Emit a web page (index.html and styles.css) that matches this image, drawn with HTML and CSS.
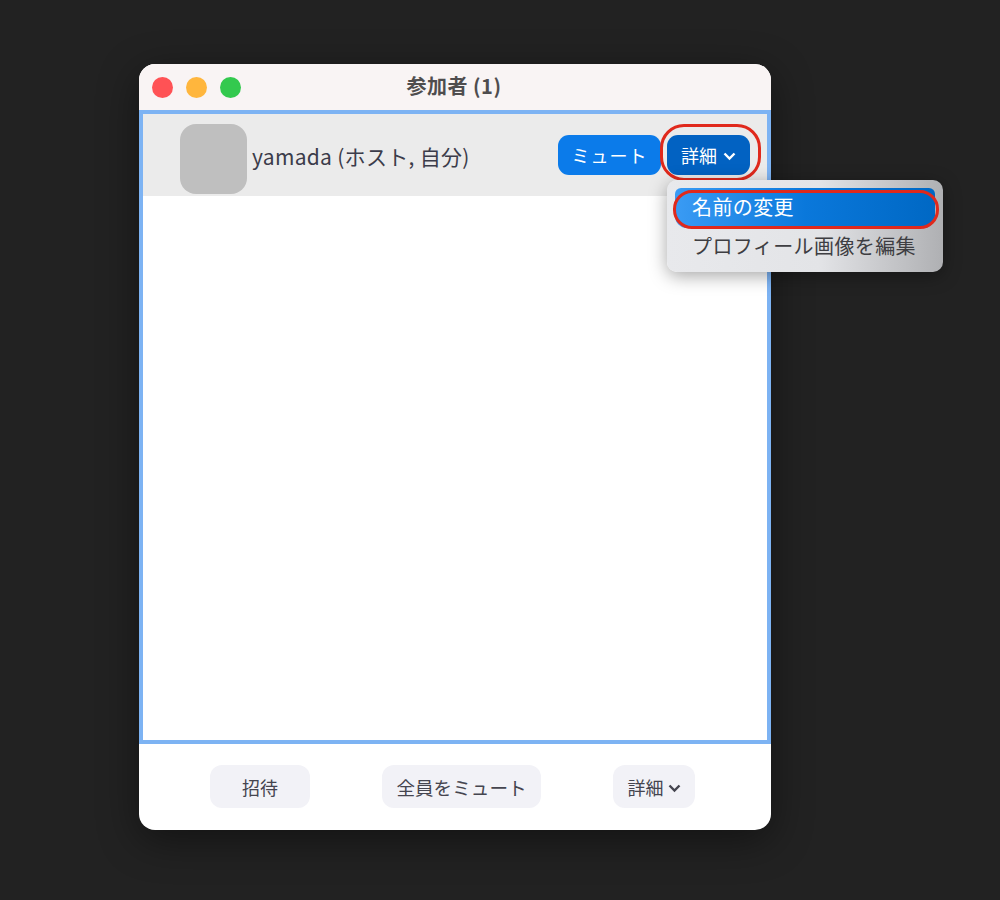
FILE: index.html
```html
<!DOCTYPE html>
<html lang="ja">
<head>
    <meta charset="UTF-8">
    <title>参加者 (1)</title>
    <link rel="stylesheet" href="styles.css">
</head>
<body>

    <div class="window">
        <div class="titlebar">
            <div class="lights">
                <span class="light red"></span>
                <span class="light yellow"></span>
                <span class="light green"></span>
            </div>
            <div class="title">参加者 (1)</div>
        </div>

        <div class="list">
            <div class="row">
                <div class="avatar"></div>
                <div class="name">yamada (ホスト, 自分)</div>
                <button class="btn-mute">ミュート</button>
                <button class="btn-more">詳細<svg class="chev" width="13" height="9" viewBox="0 0 13 9"><path d="M1.5 1.5 6.5 6.5l5-5" fill="none" stroke="currentColor" stroke-width="2.4"/></svg></button>
            </div>
        </div>

        <div class="footer">
            <button class="btn-foot invite">招待</button>
            <button class="btn-foot mute-all">全員をミュート</button>
            <button class="btn-foot more">詳細<svg class="chev" width="13" height="9" viewBox="0 0 13 9"><path d="M1.5 1.5 6.5 6.5l5-5" fill="none" stroke="currentColor" stroke-width="2.4"/></svg></button>
        </div>

        <div class="ring ring-more"></div>

        <div class="menu">
            <div class="menu-item active">名前の変更</div>
            <div class="menu-item">プロフィール画像を編集</div>
            <div class="ring ring-item"></div>
        </div>
    </div>

</body>
</html>
```

FILE: styles.css
```css
body {
    margin: 0;
    height: 900px;
    overflow: hidden;
    background: #222222;
    font-family: "Noto Sans CJK JP", "Liberation Sans", sans-serif;
}
button {
    font-family: inherit;
    border: none;
    padding: 0;
}
.window {
    position: relative;
    width: 632px;
    height: 766px;
    margin: 64px 0 0 139px;
    background: white;
    border-radius: 16px;
    box-shadow: 0 10px 40px rgba(0, 0, 0, 0.45);
}
.titlebar {
    display: flex;
    align-items: center;
    position: relative;
    height: 46px;
    background: #f9f4f4;
    border-radius: 16px 16px 0 0;
}
.lights {
    display: flex;
    gap: 13px;
    margin-left: 13px;
}
.light {
    width: 21px;
    height: 21px;
    border-radius: 50%;
}
.red { background: #ff5255; }
.yellow { background: #ffb63d; }
.green { background: #33c94e; }
.title {
    position: absolute;
    left: 0;
    right: 2px;
    top: 7px;
    text-align: center;
    font-size: 20px;
    line-height: 30px;
    letter-spacing: 0.5px;
    font-weight: 700;
    color: #4f4d4e;
}
.list {
    height: 634px;
    box-sizing: border-box;
    border: 4px solid #7db3f3;
    background: white;
}
.row {
    display: flex;
    align-items: center;
    height: 82px;
    background: #ebebeb;
}
.avatar {
    flex: none;
    align-self: flex-start;
    width: 67px;
    height: 70px;
    margin: 10px 0 0 37px;
    background: #bfbfbf;
    border-radius: 16px;
}
.name {
    flex: 1;
    margin: 2px 0 0 5px;
    font-size: 21px;
    letter-spacing: 0.3px;
    color: #3b3c4a;
}
.btn-mute, .btn-more {
    height: 40px;
    border-radius: 11px;
    color: white;
    font-size: 18px;
}
.btn-mute {
    width: 103px;
    background: #0b7bea;
    letter-spacing: 1px;
}
.btn-more {
    width: 83px;
    margin-left: 6px;
    margin-right: 17px;
    background: #0262c2;
}
.chev {
    vertical-align: 2px;
    margin-left: 6px;
}
.footer {
    position: relative;
    height: 86px;
}
.btn-foot {
    position: absolute;
    top: 21px;
    height: 43px;
    background: #f2f2f7;
    border-radius: 12px;
    color: #45454f;
    font-size: 18px;
}
.btn-foot .chev {
    margin-left: 4px;
}
.invite { left: 71px; width: 100px; }
.mute-all { left: 243px; width: 159px; font-size: 18.6px; }
.more { left: 474px; width: 82px; }
.menu {
    position: absolute;
    left: 528px;
    top: 116px;
    width: 276px;
    height: 92px;
    box-sizing: border-box;
    padding: 8px;
    border-radius: 10px;
    background: linear-gradient(90deg, #e8e9ec 0%, #e3e4e7 55%, #afb0b3 100%);
    box-shadow: 0 4px 18px rgba(0, 0, 0, 0.35);
}
.menu-item {
    height: 38px;
    line-height: 36px;
    padding-left: 17px;
    font-size: 20px;
    letter-spacing: 0.4px;
    color: #3e3e42;
}
.menu-item.active {
    height: 40px;
    line-height: 38px;
    border-radius: 6px 6px 12px 12px;
    background: linear-gradient(90deg, #3a9bf4 0%, #0a78db 50%, #0068c4 100%);
    color: white;
}
.ring {
    position: absolute;
    box-sizing: border-box;
    border: 3px solid #e0291c;
}
.ring-more {
    left: 521px;
    top: 60px;
    width: 101px;
    height: 57px;
    border-radius: 24px;
}
.ring-item {
    left: 6px;
    top: 10px;
    width: 266px;
    height: 39px;
    border-radius: 19px;
}
```
